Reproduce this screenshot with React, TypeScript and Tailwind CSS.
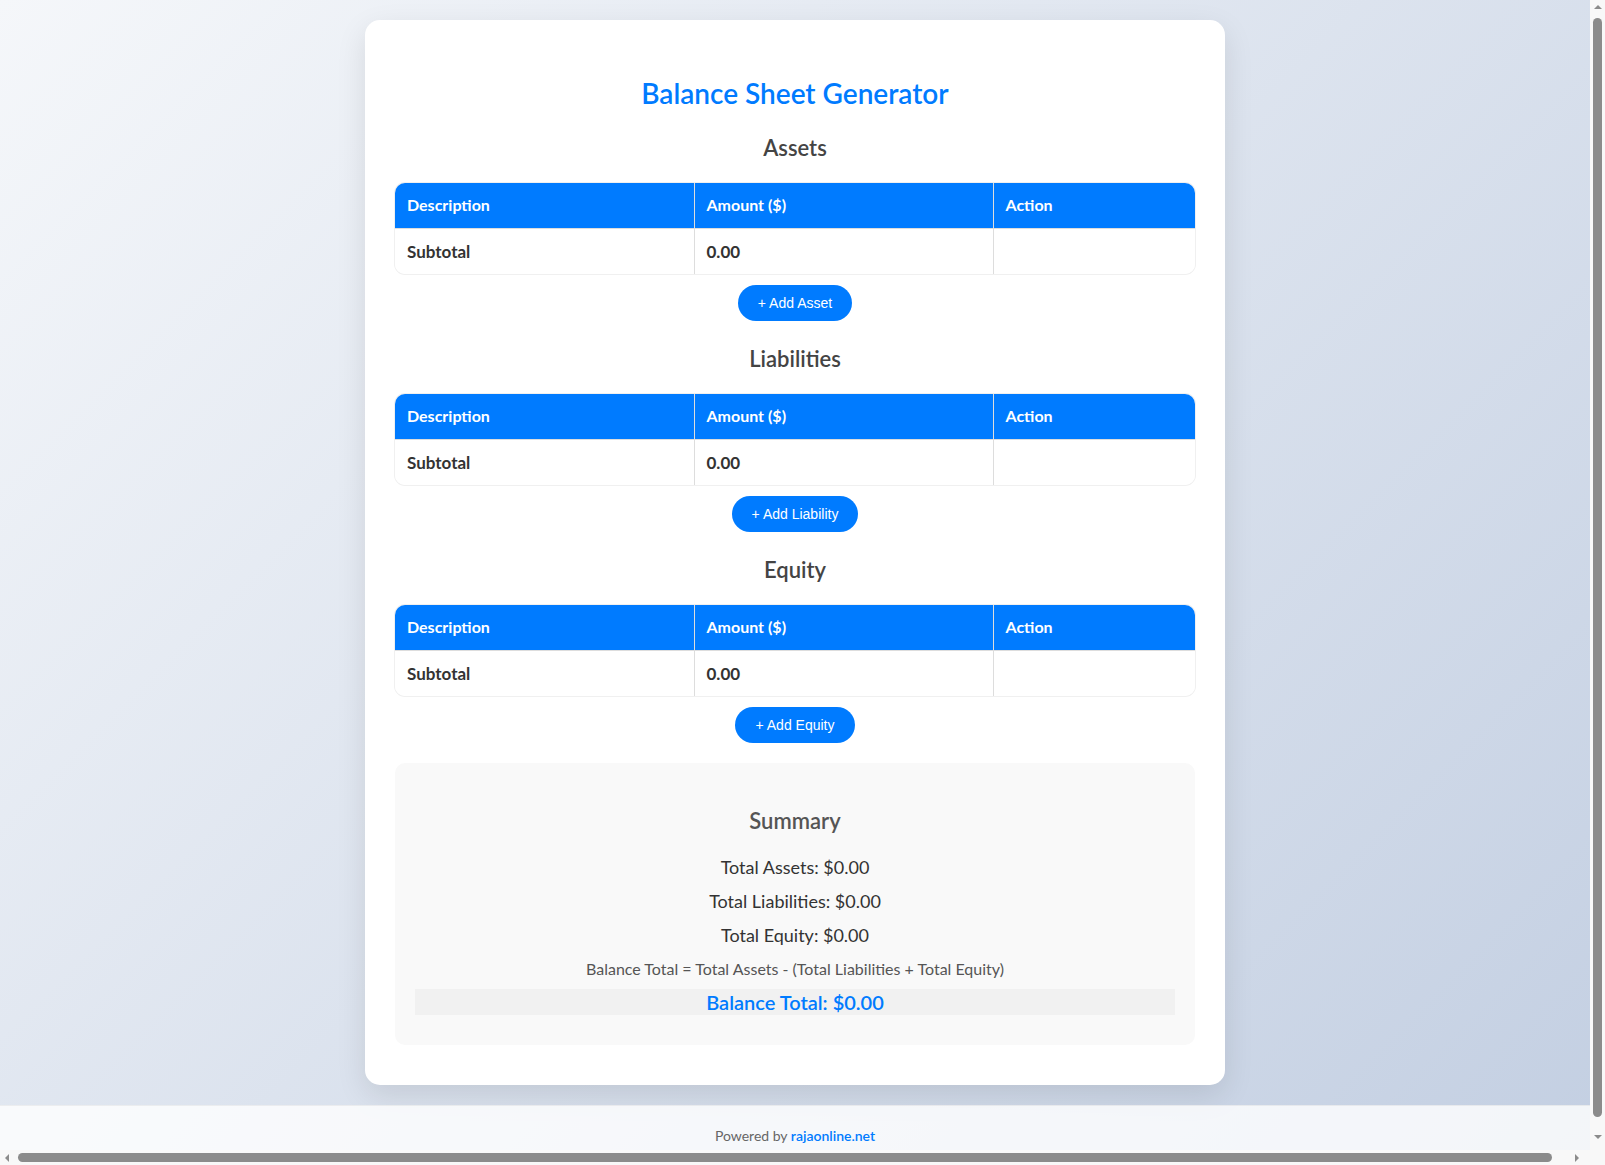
const SECTIONS = [
  { title: "Assets", button: "+ Add Asset" },
  { title: "Liabilities", button: "+ Add Liability" },
  { title: "Equity", button: "+ Add Equity" },
];

const TOTALS = ["Total Assets: $0.00", "Total Liabilities: $0.00", "Total Equity: $0.00"];

function SectionTable({ title, button, first }: { title: string; button: string; first: boolean }) {
  return (
    <section>
      <h2
        className={`${first ? "mt-5" : "mt-[23px]"} mb-5 h-[30px] text-center text-[22px] font-semibold leading-[30px] text-[#444]`}
      >
        {title}
      </h2>

      <div className="overflow-hidden rounded-[10px] shadow-[0_0_0_1px_#f0f0f0]">
        <table className="w-full table-fixed border-collapse text-left text-[16px]">
          <colgroup>
            <col className="w-[299px]" />
            <col className="w-[299px]" />
            <col />
          </colgroup>
          <thead>
            <tr className="bg-[#007bff] text-white">
              <th className="h-[45px] border-r border-[#ddd] px-3 font-bold">Description</th>
              <th className="h-[45px] border-r border-[#ddd] px-3 font-bold">Amount ($)</th>
              <th className="h-[45px] px-3 font-bold">Action</th>
            </tr>
          </thead>
          <tbody>
            <tr className="border-t border-[#ddd] bg-white text-[#333]">
              <td className="h-[46px] border-r border-[#ddd] px-3 text-[17px] font-bold">Subtotal</td>
              <td className="h-[46px] border-r border-[#ddd] px-3 text-[17px] font-bold">0.00</td>
              <td className="h-[46px] px-3" />
            </tr>
          </tbody>
        </table>
      </div>

      <button className="mx-auto mt-[11px] block rounded-full bg-[#007bff] px-5 py-[10px] font-['Liberation_Sans',Arial,sans-serif] text-[14px] leading-4 text-white">
        {button}
      </button>
    </section>
  );
}

// browser scrollbars as they appear in the capture
function Scrollbars() {
  return (
    <>
      <div className="fixed top-0 right-0 flex h-[1150px] w-[15px] flex-col items-center bg-[#f8f8f8]">
        <div className="mt-[5px] h-0 w-0 border-x-4 border-b-4 border-x-transparent border-b-[#8b8b8b]" />
        <div className="mt-[9px] h-[1099px] w-[9px] rounded-full bg-[#8b8b8b]" />
        <div className="mt-[18px] h-0 w-0 border-x-4 border-t-4 border-x-transparent border-t-[#8b8b8b]" />
      </div>
      <div className="fixed bottom-0 left-0 flex h-[15px] w-[1590px] items-center bg-[#f8f8f8]">
        <div className="ml-[5px] h-0 w-0 border-y-4 border-r-4 border-y-transparent border-r-[#8b8b8b]" />
        <div className="ml-[9px] h-[9px] w-[1534px] rounded-full bg-[#8b8b8b]" />
        <div className="ml-[23px] h-0 w-0 border-y-4 border-l-4 border-y-transparent border-l-[#8b8b8b]" />
      </div>
      <div className="fixed right-0 bottom-0 h-[15px] w-[15px] bg-[#f8f8f8]" />
    </>
  );
}

export default function App() {
  return (
    <div className="min-h-screen w-[calc(100%-15px)] bg-linear-135 from-[#f5f7fa] to-[#c3cfe2] font-['Lato','Noto_Sans',sans-serif]">
      <main className="py-5">
        <div className="mx-auto w-[860px] rounded-[15px] bg-white px-[30px] pt-[30px] pb-10 shadow-[0_10px_30px_rgba(0,0,0,0.1)]">
          <h1 className="mt-[23px] h-10 text-center text-[28px] font-semibold leading-10 text-[#007bff]">
            Balance Sheet Generator
          </h1>

          {SECTIONS.map((s, i) => (
            <SectionTable key={s.title} title={s.title} button={s.button} first={i === 0} />
          ))}

          {/* Summary */}
          <div className="mt-5 rounded-[10px] bg-[#f9f9f9] p-5 pb-[30px] text-center">
            <h3 className="mt-[23px] h-[30px] text-[22px] font-semibold leading-[30px] text-[#555]">Summary</h3>
            <div className="mt-[14px]">
              {TOTALS.map((t) => (
                <p key={t} className="h-[34px] text-[18px] leading-[34px] text-[#333]">
                  {t}
                </p>
              ))}
              <p className="h-[34px] text-[16px] leading-[34px] text-[#555]">
                Balance Total = Total Assets - (Total Liabilities + Total Equity)
              </p>
            </div>
            <div className="mt-[3px] h-[26px] bg-[#f1f1f1] text-[20px] font-semibold leading-[26px] text-[#007bff]">
              Balance Total: $0.00
            </div>
          </div>
        </div>
      </main>

      <footer className="border-t border-black/5 bg-white/80 pt-5 pb-[26px] text-center text-[14px] leading-5 text-[#666]">
        Powered by <a className="font-semibold text-[#007bff]">rajaonline.net</a>
      </footer>

      <Scrollbars />
    </div>
  );
}
